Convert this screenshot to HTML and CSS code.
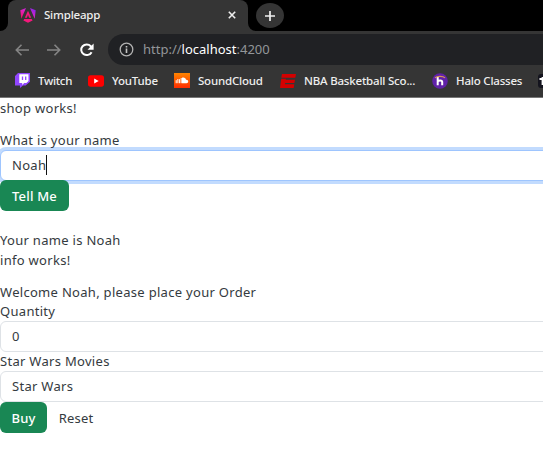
FILE: index.html
```
<!DOCTYPE html>
<html lang="en">
<head>
<meta charset="utf-8">
<title>Simpleapp</title>
<link rel="stylesheet" href="styles.css">
</head>
<body>
<header class="browser">
  <div class="tabstrip">
    <div class="strip-edge"></div>
    <div class="tab">
      <svg class="tab-icon" width="16" height="16" viewBox="0 0 16 16">
        <defs><linearGradient id="ng" x1="0" y1="1" x2="1" y2="0"><stop offset="0" stop-color="#f50f50"/><stop offset=".5" stop-color="#df22c8"/><stop offset="1" stop-color="#7526f5"/></linearGradient></defs>
        <path fill="url(#ng)" d="M6 1 1.3 11.8.3 3.2ZM10 1l5.7 2.2-1 8.6Z"/>
        <path fill="#f5187c" d="m8 3.8 3.2 7H9.1L8 7.8l-1.1 3H4.8ZM4.2 12h7.6l.8 1.6L8 15.7l-4.6-2.1Z"/>
      </svg>
      <span class="tab-title">Simpleapp</span>
      <svg class="tab-close" width="8" height="8" viewBox="0 0 8 8"><path d="M.8.8l6.4 6.4M7.2.8.8 7.2" stroke="#eee" stroke-width="1.6"/></svg>
    </div>
    <div class="strip-rest">
      <div class="new-tab"><svg width="12" height="12" viewBox="0 0 12 12"><path d="M6 1v10M1 6h10" stroke="#f0f0f0" stroke-width="1.7"/></svg></div>
    </div>
  </div>
  <div class="toolbar">
    <svg class="nav-icon" width="14" height="12" viewBox="0 0 14 12"><path d="M14 6H1.5M6.5.8 1.3 6l5.2 5.2" fill="none" stroke="#858585" stroke-width="1.6"/></svg>
    <svg class="nav-icon" width="14" height="12" viewBox="0 0 14 12"><path d="M0 6h12.5M7.5.8 12.7 6l-5.2 5.2" fill="none" stroke="#858585" stroke-width="1.6"/></svg>
    <svg class="nav-icon" width="16" height="14" viewBox="0 0 16 14"><path d="M12.6 9.2A5.5 5.3 0 1 1 11.8 3.2L13 4.4" fill="none" stroke="#fff" stroke-width="2"/><path d="M14.6.6v6.1H8.5Z" fill="#fff"/></svg>
    <div class="address">
      <svg width="15" height="15" viewBox="0 0 15 15"><circle cx="7.5" cy="7.5" r="6.3" fill="none" stroke="#b2b2b2" stroke-width="1.3"/><path d="M7.5 6.5v4.4M7.5 4v1.6" stroke="#c4c4c4" stroke-width="1.6"/></svg>
      <span class="url">http://<b>localhost</b>:4200</span>
    </div>
  </div>
  <nav class="bookmarks">
    <svg class="bm-icon twitch" width="15" height="15" viewBox="0 0 15 15"><path fill="#9146ff" d="M3 0h12v8.8L10.6 12.5H8L5 15v-2.5H0V3Z"/><path fill="#fff" d="M4.3 1.2h9.2v6.7l-2.1 2.2H9.2l-2 1.8v-1.8H4.3Z"/><path d="M7.5 3.5v3.6M10.7 3.5v3.6" stroke="#9146ff" stroke-width="1.3"/></svg>
    <span class="bm-label twitch-label">Twitch</span>
    <svg class="bm-icon youtube" width="16" height="12" viewBox="0 0 16 12"><rect width="16" height="11.4" y=".3" rx="2.6" fill="#f00"/><path fill="#fff" d="m6.2 3.6 4.5 2.4-4.5 2.4Z"/></svg>
    <span class="bm-label youtube-label">YouTube</span>
    <svg class="bm-icon soundcloud" width="16" height="15" viewBox="0 0 16 15"><defs><linearGradient id="sc" x1="0" y1="0" x2="0" y2="1"><stop offset="0" stop-color="#ff8500"/><stop offset="1" stop-color="#ff2d00"/></linearGradient></defs><path fill="url(#sc)" d="M0 0h16v15H0z"/><path d="M2.2 7.2v3M3.9 6v4.2M5.6 6.2v4M7.2 5v5.2" stroke="#fff"/><path fill="#fff" d="M8 4.8c2-.8 3.8.3 4 2 1.1-.4 2.2.5 2.2 1.7 0 1-.8 1.7-1.7 1.7H8Z"/></svg>
    <span class="bm-label soundcloud-label">SoundCloud</span>
    <svg class="bm-icon espn" width="16" height="14" viewBox="0 0 16 14"><path fill="#d40000" d="M2 0h14l-.7 3.8H1.3ZM1.2 4.8H6l-.3 1H15l-.6 3.3H5.2L5 10.2h9.3l-.6 3.8H0Z"/></svg>
    <span class="bm-label nba-label">NBA Basketball Sco...</span>
    <svg class="bm-icon halo" width="16" height="16" viewBox="0 0 16 16"><circle cx="8" cy="8" r="7.8" fill="#6021a8"/><path d="M5.7 4v8.3M5.7 8.4c1-1.3 4.5-1.5 4.5.6v3.3" fill="none" stroke="#fff" stroke-width="2"/><path d="M3 4.8c2-2 8-2 10 0" fill="none" stroke="#d69b50" stroke-width="1.2"/></svg>
    <span class="bm-label halo-label">Halo Classes</span>
    <svg class="bm-icon last" width="16" height="14" viewBox="0 0 16 14"><rect width="16" height="14" rx="3" fill="#14141e"/><path d="M1.5 5H7M4.5 3v8" stroke="#fff" stroke-width="1.8"/></svg>
  </nav>
</header>
<main class="page">
  <p class="text shop">shop works!</p>
  <label class="text name-label">What is your name</label>
  <div class="field focused"><span class="typed">Noah</span></div>
  <button class="btn tell">Tell Me</button>
  <p class="text answer">Your name is Noah</p>
  <p class="text info">info works!</p>
  <p class="text welcome">Welcome Noah, please place your Order</p>
  <label class="text quantity">Quantity</label>
  <div class="field">0</div>
  <label class="text movies">Star Wars Movies</label>
  <div class="field">Star Wars</div>
  <div class="actions"><button class="btn buy">Buy</button><button class="btn reset">Reset</button></div>
</main>
</body>
</html>
```

FILE: styles.css
```
* { box-sizing: border-box; }
body { margin: 0; width: 543px; height: 462px; overflow: hidden; background: #fff; }
svg { display: block; flex: none; }
.browser { height: 98px; background: #353535; border-bottom: 1px solid #777; font-family: "Noto Sans", sans-serif; }
.tabstrip { display: flex; height: 31px; }
.strip-edge { width: 8px; background: #000; border-bottom-right-radius: 8px; }
.tab { display: flex; align-items: center; width: 240px; padding: 0 0 1px 12px; background: linear-gradient(#000, #000) left top / 8px 8px no-repeat, linear-gradient(#000, #000) right top / 8px 8px no-repeat; position: relative; }
.tab::before { content: ""; position: absolute; inset: 0; background: #353535; border-radius: 8px 8px 0 0; }
.tab > * { position: relative; }
.tab-title { margin-left: 8px; width: 184px; font: 500 11.5px/18px "Noto Sans", sans-serif; letter-spacing: -.2px; color: #eee; }
.strip-rest { flex: 1; padding: 3px 0 0 8px; background: #000; border-bottom-left-radius: 8px; }
.new-tab { display: flex; align-items: center; justify-content: center; width: 28px; height: 25px; background: #353535; border-radius: 50%; }
.toolbar { display: flex; align-items: center; height: 34px; padding: 3px 0 0 15px; }
.nav-icon { margin-right: 18px; }
.nav-icon:nth-child(3) { margin-right: 13px; }
.address { display: flex; align-items: center; flex: 1; height: 31px; padding: 0 0 1px 11px; background: #202124; border-radius: 16px 0 0 16px; }
.url { margin-left: 9px; font-size: 13px; color: #939699; white-space: nowrap; }
.url b { font-weight: 400; color: #fff; }
.bookmarks { display: flex; align-items: center; height: 32px; padding: 0 0 1px 15px; overflow: hidden; }
.bm-label { flex: none; margin-left: 8px; font-size: 11.5px; font-weight: 500; line-height: 18px; letter-spacing: -.2px; color: #eee; white-space: nowrap; }
.twitch-label { width: 50px; letter-spacing: -.3px; }
.youtube-label { width: 62px; }
.soundcloud-label { width: 82px; }
.nba-label { width: 128px; }
.halo-label { width: 82px; }
.page { color: #343a40; font: 13px/20px "Noto Sans", sans-serif; letter-spacing: .3px; }
.text { display: block; margin: 0; height: 20px; white-space: nowrap; }
.name-label { margin-top: 12px; }
.field { display: flex; align-items: center; width: 560px; height: 31px; padding: 0 0 2px 11px; border: 1px solid #dee2e6; border-radius: 6px; background: #fff; }
.focused { border-color: #9ec5fe; box-shadow: 0 0 0 3px #c2dbfe; }
.typed { border-right: 1px solid #111; }
.btn { display: block; position: relative; height: 31px; padding: 0; border: 0; border-radius: 6px; background: #198754; color: #fff; font: 500 13px/20px "Noto Sans", sans-serif; letter-spacing: .2px; }
.tell { width: 69px; margin-top: -1px; }
.answer { margin-top: 19px; }
.welcome { margin-top: 12px; }
.quantity { height: 19px; line-height: 18px; }
.movies { height: 19px; line-height: 18px; }
.actions { display: flex; }
.buy { width: 47px; }
.reset { width: 58px; background: none; color: #343a40; font-weight: 400; }
```
